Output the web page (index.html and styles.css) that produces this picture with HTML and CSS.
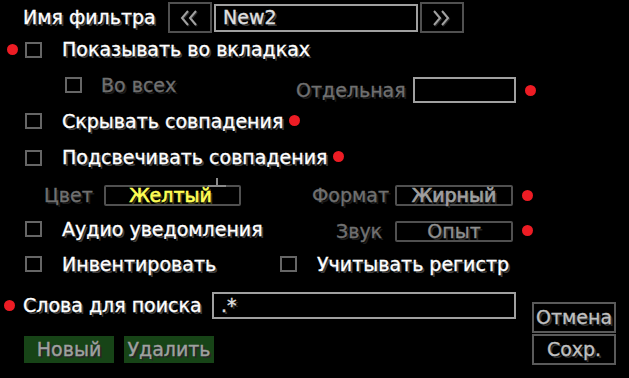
FILE: index.html
```html
<!DOCTYPE html>
<html lang="ru">
<head>
    <meta charset="UTF-8">
    <title>Фильтр</title>
    <link rel="stylesheet" href="styles.css">
</head>
<body>
    <div class="screen">
        <div class="row row-name">
            <span class="label name-label">Имя фильтра</span>
            <button class="nav">
                <svg width="20" height="18" viewBox="0 0 20 18">
                    <polyline points="8,2 2,9 8,16" class="chev-shadow" transform="translate(1,1)"/>
                    <polyline points="16,2 10,9 16,16" class="chev-shadow" transform="translate(1,1)"/>
                    <polyline points="8,2 2,9 8,16" class="chev"/>
                    <polyline points="16,2 10,9 16,16" class="chev"/>
                </svg>
            </button>
            <div class="field name-field">New2</div>
            <button class="nav">
                <svg width="20" height="18" viewBox="0 0 20 18">
                    <polyline points="2,2 8,9 2,16" class="chev-shadow" transform="translate(1,1)"/>
                    <polyline points="10,2 16,9 10,16" class="chev-shadow" transform="translate(1,1)"/>
                    <polyline points="2,2 8,9 2,16" class="chev"/>
                    <polyline points="10,2 16,9 10,16" class="chev"/>
                </svg>
            </button>
        </div>

        <div class="row row-tabs">
            <span class="gutter"><span class="dot"></span></span>
            <span class="check"></span>
            <span class="label">Показывать во вкладках</span>
        </div>

        <div class="row row-sub">
            <span class="gutter"></span>
            <span class="check check-sub"></span>
            <span class="label muted all-label">Во всех</span>
            <span class="label muted sep-label">Отдельная</span>
            <div class="field sep-field"></div>
            <span class="dot dot-after"></span>
        </div>

        <div class="row row-hide">
            <span class="gutter"></span>
            <span class="check"></span>
            <span class="label">Скрывать совпадения</span>
            <span class="dot dot-inline"></span>
        </div>

        <div class="row row-light">
            <span class="gutter"></span>
            <span class="check"></span>
            <span class="label">Подсвечивать совпадения</span>
            <span class="dot dot-inline"></span>
        </div>

        <div class="row row-color">
            <span class="gutter"></span>
            <span class="label muted color-label">Цвет</span>
            <button class="opt color-btn">Желтый</button>
            <span class="label muted format-label">Формат</span>
            <button class="opt format-btn">Жирный</button>
            <span class="dot dot-after"></span>
        </div>

        <div class="row row-audio">
            <span class="gutter"></span>
            <span class="check"></span>
            <span class="label audio-label">Аудио уведомления</span>
            <span class="label muted sound-label">Звук</span>
            <button class="opt sound-btn">Опыт</button>
            <span class="dot dot-after"></span>
        </div>

        <div class="row row-invert">
            <span class="gutter"></span>
            <span class="check"></span>
            <span class="label invert-label">Инвентировать</span>
            <span class="check"></span>
            <span class="label">Учитывать регистр</span>
        </div>

        <div class="bottom">
            <div class="bottom-left">
                <div class="row row-search">
                    <span class="gutter gutter-search"><span class="dot"></span></span>
                    <span class="label search-label">Слова для поиска</span>
                    <div class="field search-field">.*</div>
                </div>
                <div class="row row-actions">
                    <button class="green">Новый</button>
                    <button class="green">Удалить</button>
                </div>
            </div>
            <div class="bottom-right">
                <button class="side">Отмена</button>
                <button class="side">Сохр.</button>
            </div>
        </div>
    </div>
</body>
</html>
```

FILE: styles.css
```css
html, body {
    margin: 0;
    padding: 0;
    background: #000;
}
body {
    width: 629px;
    height: 378px;
    overflow: hidden;
    font-family: "DejaVu Sans", "Liberation Sans", sans-serif;
    font-size: 19px;
    color: #fff;
    -webkit-text-stroke: 0.35px currentColor;
}
button {
    font: inherit;
    margin: 0;
    padding: 0;
    background: #000;
    cursor: pointer;
}
.screen {
    padding-top: 2px;
}
.row {
    display: flex;
    align-items: center;
}
.label {
    line-height: 15px;
    white-space: nowrap;
    color: #fff;
    text-shadow: 2px 2px 0 #3f3f3f;
}
.muted {
    color: #707070;
    text-shadow: 2px 2px 0 #1c1c1c;
}
.gutter {
    width: 25px;
    flex-shrink: 0;
    display: flex;
    align-items: center;
    padding-left: 7px;
    box-sizing: border-box;
}
.gutter-search {
    width: 23px;
    padding-left: 4px;
}
.dot {
    display: inline-block;
    width: 11px;
    height: 11px;
    border-radius: 50%;
    background: #ed1c24;
    flex-shrink: 0;
}
.dot-after {
    margin-left: 9px;
}
.dot-inline {
    margin-left: 6px;
    margin-top: -2px;
}
.check {
    width: 17px;
    height: 16px;
    border: 2px solid #666;
    box-sizing: border-box;
    margin-right: 20px;
    flex-shrink: 0;
}
.field {
    border: 2px solid #a0a0a0;
    box-sizing: border-box;
    color: #e0e0e0;
    text-shadow: 2px 2px 0 #383838;
    padding-left: 7px;
    display: flex;
    align-items: center;
    line-height: 15px;
}

/* name row */
.row-name {
    height: 31px;
    padding-left: 23px;
}
.name-label {
    width: 145px;
}
.nav {
    width: 44px;
    height: 31px;
    border: 2px solid #505050;
    display: flex;
    align-items: center;
    justify-content: center;
}
.chev {
    fill: none;
    stroke: #a0a0a0;
    stroke-width: 2;
}
.chev-shadow {
    fill: none;
    stroke: #2a2a2a;
    stroke-width: 2;
}
.name-field {
    width: 204px;
    height: 28px;
    margin: 0 2px;
}

.row-tabs {
    margin-top: 9px;
    height: 15px;
}

.row-sub {
    margin-top: 20px;
    height: 26px;
}
.check-sub {
    margin-left: 40px;
    margin-right: 19px;
    align-self: flex-start;
}
.all-label {
    width: 195px;
    align-self: flex-start;
    margin-top: 1px;
}
.sep-label {
    width: 117px;
}
.sep-field {
    width: 103px;
    height: 26px;
}

.row-hide {
    margin-top: 10px;
    height: 16px;
}
.row-light {
    margin-top: 21px;
    height: 15px;
}

.row-color {
    margin-top: 20px;
    height: 21px;
}
.opt {
    height: 21px;
    border: 2px solid #505050;
    border-radius: 2px;
    color: #909090;
    text-shadow: 2px 2px 0 #242424;
    line-height: 15px;
}
.color-label {
    margin-left: 19px;
    width: 60px;
}
.color-btn {
    width: 137px;
    position: relative;
    color: #ffff55;
    text-shadow: 2px 2px 0 #3f3f15;
    -webkit-text-stroke: 0.6px currentColor;
    margin-right: 71px;
    padding-right: 4px;
}
.color-btn::before {
    content: "";
    position: absolute;
    left: 102px;
    top: -2px;
    width: 18px;
    height: 2px;
    background: #8a8a8a;
}
.color-btn::after {
    content: "";
    position: absolute;
    left: 110px;
    top: -9px;
    width: 2px;
    height: 8px;
    background: #8a8a8a;
}
.format-label {
    width: 83px;
}
.format-btn {
    width: 118px;
    color: #a0a0a0;
    -webkit-text-stroke: 0.7px currentColor;
}

.row-audio {
    margin-top: 15px;
    height: 21px;
    align-items: flex-start;
}
.audio-label {
    width: 274px;
    margin-top: 1px;
}
.sound-label {
    width: 59px;
    margin-top: 3px;
}
.sound-btn {
    width: 118px;
}
.row-audio .dot-after {
    margin-top: 4px;
}

.row-invert {
    margin-top: 14px;
    height: 16px;
}
.invert-label {
    width: 218px;
}
.row-invert .check + .label + .check {
    margin-right: 20px;
}

/* bottom block */
.bottom {
    display: flex;
    margin-top: 20px;
}
.bottom-left {
    width: 532px;
}
.row-search {
    height: 27px;
}
.search-label {
    width: 189px;
}
.search-field {
    width: 304px;
    height: 27px;
}
.row-actions {
    margin-top: 17px;
    padding-left: 24px;
    gap: 10px;
}
.green {
    width: 90px;
    height: 27px;
    border: none;
    background: #174417;
    color: #a0a0a0;
    text-shadow: 2px 2px 0 #282828;
    line-height: 15px;
}
.bottom-right {
    display: flex;
    flex-direction: column;
    margin-top: 10px;
    gap: 1px;
}
.side {
    width: 84px;
    height: 31px;
    border: 2px solid #5a5a5a;
    color: #c0c0c0;
    text-shadow: 2px 2px 0 #303030;
    line-height: 15px;
}
```
